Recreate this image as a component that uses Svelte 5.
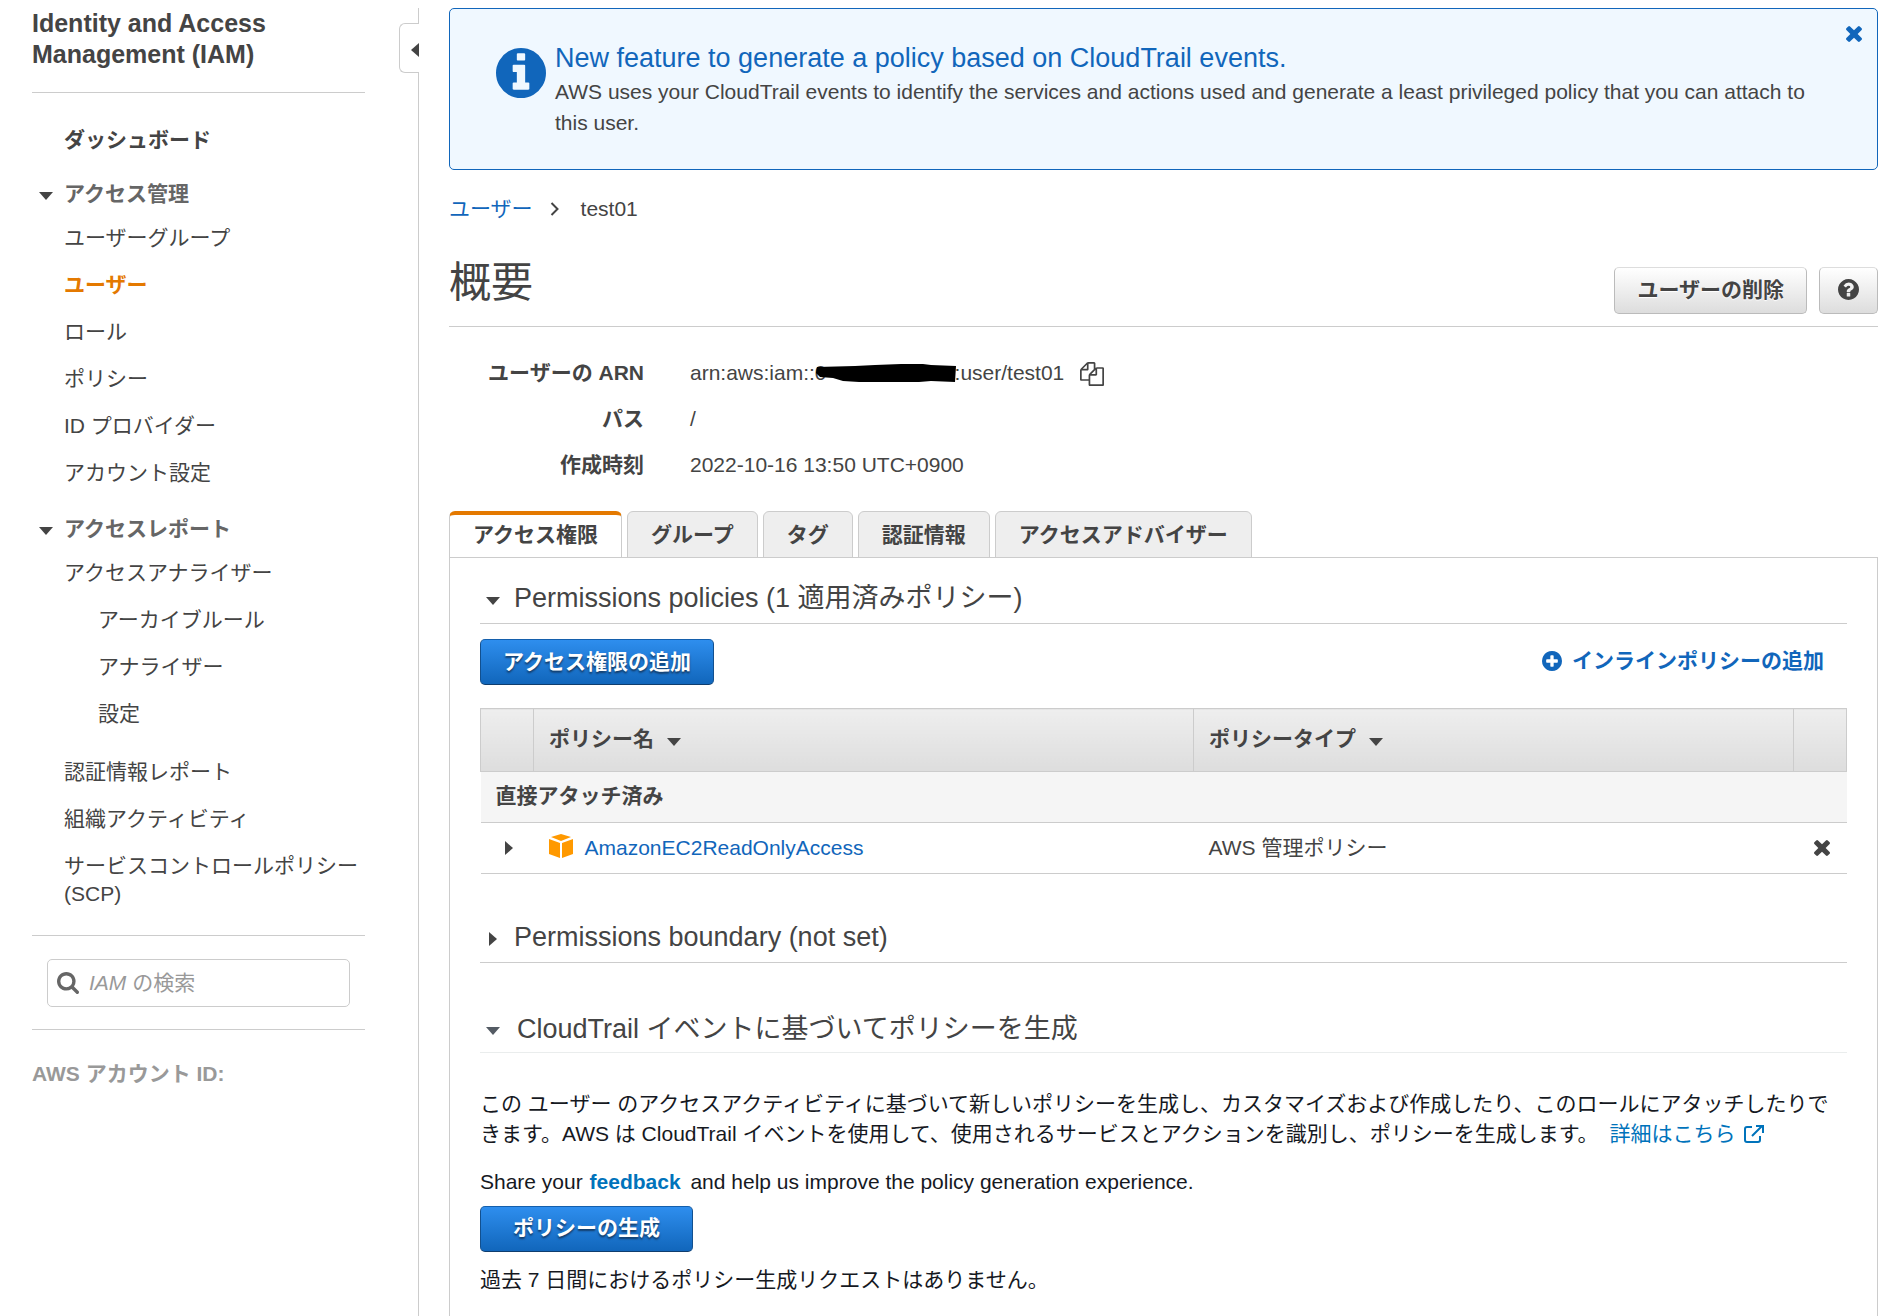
<script>
    let search = '';

    const accessItems = [
        { label: 'ユーザーグループ' },
        { label: 'ユーザー', active: true },
        { label: 'ロール' },
        { label: 'ポリシー' },
        { label: 'ID プロバイダー' },
        { label: 'アカウント設定' }
    ];

    const reportItems = [
        { label: 'アクセスアナライザー', children: ['アーカイブルール', 'アナライザー', '設定'] },
        { label: '認証情報レポート' },
        { label: '組織アクティビティ' },
        { label: 'サービスコントロールポリシー (SCP)' }
    ];

    const tabs = ['アクセス権限', 'グループ', 'タグ', '認証情報', 'アクセスアドバイザー'];
    let activeTab = tabs[0];

    const circle = 'm0 0M1664 896q0 209-103 385.5t-279.5 279.5-385.5 103-385.5-103-279.5-279.5-103-385.5 103-385.5 279.5-279.5 385.5-103 385.5 103 279.5 279.5 103 385.5z';
    const icons = {
        times: 'M1490 1322q0 40-28 68l-136 136q-28 28-68 28t-68-28l-294-294-294 294q-28 28-68 28t-68-28l-136-136q-28-28-28-68t28-68l294-294-294-294q-28-28-28-68t28-68l136-136q28-28 68-28t68 28l294 294 294-294q28-28 68-28t68 28l136 136q28 28 28 68t-28 68l-294 294 294 294q28 28 28 68z',
        question: 'M1024 1376v-192q0-14-9-23t-23-9h-192q-14 0-23 9t-9 23v192q0 14 9 23t23 9h192q14 0 23-9t9-23zm256-672q0-88-55.5-163t-138.5-116-170-41q-243 0-371 213-15 24 8 42l132 100q7 6 19 6 16 0 25-12 53-68 86-92 34-24 86-24 48 0 85.5 26t37.5 59q0 38-20 61t-68 45q-63 28-115.5 86.5t-52.5 125.5v36q0 14 9 23t23 9h192q14 0 23-9t9-23q0-19 21.5-49.5t54.5-49.5q32-18 49-28.5t46-35 44.5-48 28-60.5 12.5-81z' + circle,
        info: 'M1152 1376v-160q0-14-9-23t-23-9h-96v-512q0-14-9-23t-23-9h-320q-14 0-23 9t-9 23v160q0 14 9 23t23 9h96v320h-96q-14 0-23 9t-9 23v160q0 14 9 23t23 9h448q14 0 23-9t9-23zm-128-896v-160q0-14-9-23t-23-9h-192q-14 0-23 9t-9 23v160q0 14 9 23t23 9h192q14 0 23-9t9-23z' + circle,
        plus: 'M1344 960v-128q0-26-19-45t-45-19h-256v-256q0-26-19-45t-45-19h-128q-26 0-45 19t-19 45v256h-256q-26 0-45 19t-19 45v128q0 26 19 45t45 19h256v256q0 26 19 45t45 19h128q26 0 45-19t19-45v-256h256q26 0 45-19t19-45z' + circle,
        copy: 'M1696 384q40 0 68 28t28 68v1216q0 40-28 68t-68 28h-960q-40 0-68-28t-28-68v-288h-544q-40 0-68-28t-28-68v-672q0-40 20-88t48-76l408-408q28-28 76-48t88-20h416q40 0 68 28t28 68v328q68-40 128-40h416zm-544 213l-299 299h299v-299zm-640-384l-299 299h299v-299zm196 647l316-316v-416h-384v416q0 40-28 68t-68 28h-416v640h512v-256q0-40 20-88t48-76zm956 804v-1152h-384v416q0 40-28 68t-68 28h-416v640h896z',
        search: 'M1216 832q0-185-131.5-316.5t-316.5-131.5-316.5 131.5-131.5 316.5 131.5 316.5 316.5 131.5 316.5-131.5 131.5-316.5zm512 832q0 52-38 90t-90 38q-54 0-90-38l-343-342q-179 124-399 124-143 0-273.5-55.5t-225-150-150-225-55.5-273.5 55.5-273.5 150-225 225-150 273.5-55.5 273.5 55.5 225 150 150 225 55.5 273.5q0 220-124 399l343 343q37 37 37 90z'
    };
</script>

<div class="page">
    <aside>
        <button class="collapse" aria-label="サイドバーを閉じる"><i class="tri left"></i></button>
        <div class="side-title">Identity and Access Management (IAM)</div>
        <nav>
            <a class="dashboard" href="#dashboard">ダッシュボード</a>

            <button class="group"><i class="tri down"></i>アクセス管理</button>
            <ul>
                {#each accessItems as item}
                    <li><a href="#nav" class:active={item.active}>{item.label}</a></li>
                {/each}
            </ul>

            <button class="group second"><i class="tri down"></i>アクセスレポート</button>
            <ul>
                {#each reportItems as item}
                    <li>
                        <a href="#nav">{item.label}</a>
                        {#if item.children}
                            <ul class="nested">
                                {#each item.children as child}
                                    <li><a href="#nav">{child}</a></li>
                                {/each}
                            </ul>
                        {/if}
                    </li>
                {/each}
            </ul>
        </nav>
        <div class="search">
            <label for="iam-search" aria-label="IAM の検索">
                <svg width="22" height="22" viewBox="64 128 1664 1664"><path d={icons.search} /></svg>
            </label>
            <input id="iam-search" type="text" placeholder="IAM の検索" bind:value={search}>
        </div>
        <div class="account">AWS アカウント ID:</div>
    </aside>

    <main>
        <section class="banner">
            <svg class="info" width="50" height="50" viewBox="128 128 1536 1536"><path d={icons.info} fill-rule="evenodd" /></svg>
            <div>
                <h2>New feature to generate a policy based on CloudTrail events.</h2>
                <p>AWS uses your CloudTrail events to identify the services and actions used and generate a least privileged policy that you can attach to this user.</p>
            </div>
            <button class="close" aria-label="閉じる">
                <svg width="16" height="16" viewBox="302 366 1188 1188"><path d={icons.times} /></svg>
            </button>
        </section>

        <div class="breadcrumb">
            <a href="#users">ユーザー</a>
            <svg width="10" height="14" viewBox="0 0 10 14"><path d="M1.500 1L7.500 7l-6 6" fill="none" stroke="#444" stroke-width="2" /></svg>
            <span>test01</span>
        </div>

        <header>
            <h1>概要</h1>
            <button class="btn">ユーザーの削除</button>
            <button class="btn help" aria-label="ヘルプ">
                <svg width="21" height="21" viewBox="128 128 1536 1536"><path d={icons.question} fill-rule="evenodd" /></svg>
            </button>
        </header>

        <dl>
            <dt>ユーザーの ARN</dt>
            <dd class="arn">
                <span>arn:aws:iam::0</span>
                <svg class="redacted" width="140" height="19" viewBox="0 0 140 19">
                    <path d="M1 3L39 2 59 1 85 0h22l8 1 25 1-1 16-24-1-12 1H43L27 17 17 14 4 13 0 9z" />
                </svg>
                <span>:user/test01</span>
                <button class="copy" aria-label="コピー">
                    <svg width="24" height="24" viewBox="0 0 1792 1792"><path d={icons.copy} /></svg>
                </button>
            </dd>
            <dt>パス</dt>
            <dd>/</dd>
            <dt>作成時刻</dt>
            <dd>2022-10-16 13:50 UTC+0900</dd>
        </dl>

        <div class="tabs" role="tablist">
            {#each tabs as tab}
                <button role="tab" aria-selected={tab === activeTab} class:selected={tab === activeTab} on:click={() => activeTab = tab}>{tab}</button>
            {/each}
        </div>

        <div class="panel">
            <h3><button><i class="tri down"></i>Permissions policies (1 適用済みポリシー)</button></h3>
            <div class="actions">
                <button class="btn primary">アクセス権限の追加</button>
                <a class="inline-policy" href="#inline">
                    <svg width="20" height="20" viewBox="128 128 1536 1536"><path d={icons.plus} fill-rule="evenodd" /></svg>
                    インラインポリシーの追加
                </a>
            </div>

            <table>
                <colgroup>
                    <col class="col-toggle"><col class="col-name"><col><col class="col-remove">
                </colgroup>
                <thead>
                    <tr>
                        <th></th>
                        <th>ポリシー名<i class="tri down sort"></i></th>
                        <th>ポリシータイプ<i class="tri down sort"></i></th>
                        <th></th>
                    </tr>
                </thead>
                <tbody>
                    <tr class="group-row"><td colspan="4">直接アタッチ済み</td></tr>
                    <tr>
                        <td class="center"><button aria-label="展開"><i class="tri right"></i></button></td>
                        <td>
                            <div class="policy">
                                <svg width="24" height="24" viewBox="0 0 24 24">
                                    <path d="M12 0l10 3-10 4L2 3z" />
                                    <path d="M0 5l11 4v15L0 20z" />
                                    <path d="M24 5L13 9v15l11-4z" />
                                </svg>
                                <a href="#policy">AmazonEC2ReadOnlyAccess</a>
                            </div>
                        </td>
                        <td>AWS 管理ポリシー</td>
                        <td class="center">
                            <button aria-label="デタッチ"><svg width="16" height="16" viewBox="302 366 1188 1188"><path d={icons.times} /></svg></button>
                        </td>
                    </tr>
                </tbody>
            </table>

            <h3 class="boundary"><button><i class="tri right"></i>Permissions boundary (not set)</button></h3>

            <h3 class="trail"><button><i class="tri down"></i>CloudTrail イベントに基づいてポリシーを生成</button></h3>
            <div class="generate">
                <p>この ユーザー のアクセスアクティビティに基づいて新しいポリシーを生成し、カスタマイズおよび作成したり、このロールにアタッチしたりできます。AWS は CloudTrail イベントを使用して、使用されるサービスとアクションを識別し、ポリシーを生成します。 <a class="learn" href="#learn">詳細はこちら<svg width="22" height="20" viewBox="0 0 22 20" stroke="currentColor" stroke-width="2"><path d="M9 3H4Q2 3 2 5v11q0 2 2 2h11q2 0 2-2v-4M9 12L19 2M13 2h7v7" /></svg></a></p>
                <p class="share">Share your <a class="feedback" href="#feedback">feedback</a> and help us improve the policy generation experience.</p>
                <button class="btn primary wide">ポリシーの生成</button>
                <p class="requests">過去 7 日間におけるポリシー生成リクエストはありません。</p>
            </div>
        </div>
    </main>
</div>

<style>
    :global(body) {
        margin: 0;
        background: #fff;
    }
    .page {
        display: flex;
        box-sizing: border-box;
        min-height: 100vh;
        padding-top: 8px;
        font-family: "Liberation Sans", "Noto Sans CJK JP", sans-serif;
        font-size: 21px;
        line-height: 28px;
        color: #444;
    }
    a {
        color: #1166bb;
        text-decoration: none;
    }
    button {
        padding: 0;
        border: none;
        background: none;
        font: inherit;
        color: inherit;
        text-align: left;
        cursor: pointer;
    }
    svg {
        display: block;
        flex: none;
        fill: currentColor;
    }
    ul, dl, dd, p, h1, h2, h3 {
        margin: 0;
        padding: 0;
        list-style: none;
        font-weight: normal;
    }

    /* arrows */
    .tri {
        display: inline-block;
        flex: none;
        border: 0 solid transparent;
    }
    .tri.down {
        border-width: 8px 7px 0;
        border-top-color: #444;
    }
    .tri.right {
        border-width: 7px 0 7px 8px;
        border-left-color: #444;
    }
    .tri.left {
        border-width: 7px 8px 7px 0;
        border-right-color: #444;
    }

    /* sidebar */
    aside {
        position: relative;
        flex: none;
        box-sizing: border-box;
        width: 419px;
        padding: 0 53px 0 32px;
        border-right: 1px solid #ccc;
    }
    .collapse {
        position: absolute;
        top: 15px;
        right: -1px;
        display: flex;
        align-items: center;
        justify-content: flex-end;
        box-sizing: border-box;
        width: 20px;
        height: 50px;
        padding-top: 3px;
        border: 1px solid #ccc;
        border-right: none;
        border-radius: 6px 0 0 6px;
        background: #fff;
    }
    .side-title {
        padding-bottom: 22px;
        border-bottom: 1px solid #ccc;
        font-size: 25px;
        line-height: 31px;
        font-weight: bold;
    }
    nav {
        padding: 33px 0 27px;
        border-bottom: 1px solid #ccc;
    }
    nav a {
        display: block;
        color: #444;
    }
    nav a.active {
        color: #e47900;
        font-weight: bold;
    }
    nav ul {
        display: flex;
        flex-direction: column;
        gap: 19px;
        padding-left: 32px;
    }
    nav ul.nested {
        padding: 19px 0 11px 34px;
    }
    .dashboard {
        padding-left: 32px;
        font-weight: bold;
    }
    .group {
        display: flex;
        align-items: center;
        gap: 11px;
        margin: 26px 0 16px 7px;
        color: #666;
        font-weight: bold;
    }
    .group .tri {
        margin-top: 3px;
    }
    .group.second {
        margin-top: 28px;
    }
    .search {
        display: flex;
        align-items: center;
        gap: 10px;
        box-sizing: border-box;
        height: 48px;
        margin: 23px 15px 22px;
        padding: 0 9px;
        border: 1px solid #ccc;
        border-radius: 5px;
        color: #666;
    }
    .search input {
        flex: 1;
        min-width: 0;
        padding: 0;
        border: none;
        outline: none;
        font: inherit;
        color: #444;
    }
    .search input::placeholder {
        color: #999;
        font-style: italic;
        font-synthesis: none;
        opacity: 1;
    }
    .account {
        padding-top: 30px;
        border-top: 1px solid #ccc;
        color: #999;
        font-weight: bold;
    }

    /* main column */
    main {
        display: flex;
        flex: 1;
        flex-direction: column;
        min-width: 0;
        margin: 0 19px 0 30px;
    }
    .banner {
        position: relative;
        display: flex;
        gap: 9px;
        padding: 33px 46px 31px;
        border: 1px solid #1166bb;
        border-radius: 5px;
        background: #f0f8ff;
    }
    .banner h2 {
        margin-bottom: 2px;
        font-size: 27px;
        line-height: 32px;
        color: #1166bb;
    }
    .banner p {
        line-height: 31px;
    }
    .info {
        margin-top: 6px;
        color: #1166bb;
    }
    .close {
        position: absolute;
        top: 17px;
        right: 15px;
        color: #1166bb;
    }
    .breadcrumb {
        display: flex;
        align-items: center;
        gap: 21px;
        margin: 25px 0 35px;
    }
    .breadcrumb a {
        margin-right: -4px;
    }
    header {
        display: flex;
        align-items: flex-end;
        gap: 12px;
        padding-bottom: 12px;
        border-bottom: 1px solid #ccc;
    }
    h1 {
        flex: 1;
        margin-bottom: 6px;
        font-size: 42px;
        line-height: 50px;
    }
    .btn {
        box-sizing: border-box;
        height: 47px;
        padding: 0 22px 1px;
        border: 1px solid #bbb;
        border-top-color: #ddd;
        border-radius: 5px;
        background: linear-gradient(#fff, #ddd);
        font-weight: bold;
        text-shadow: 0 1px 1px #fff;
    }
    .btn.help {
        padding: 0 18px 2px;
    }
    .btn.primary {
        height: 46px;
        border-color: #145fac #12508f #0f3d6e;
        background: linear-gradient(#2e8eee, #1166bb);
        color: #fff;
        text-shadow: 0 2px 2px #143b66;
    }
    .btn.wide {
        padding: 0 32px 2px;
    }
    dl {
        display: grid;
        grid-template-columns: 195px 1fr;
        gap: 18px 46px;
        margin: 32px 0;
    }
    dt {
        font-weight: bold;
        text-align: right;
    }
    .arn {
        display: flex;
        align-items: center;
    }
    .redacted {
        margin: 0 -1px 0 -11px;
        color: #000;
        z-index: 1;
    }
    .copy {
        margin: 2px 0 0 16px;
    }

    /* tabs */
    .tabs {
        display: flex;
        gap: 5px;
        margin-bottom: -1px;
    }
    .tabs button {
        box-sizing: border-box;
        height: 47px;
        padding: 0 23px;
        border: 1px solid #ccc;
        border-radius: 6px 6px 0 0;
        background: #eee;
        font-weight: bold;
    }
    .tabs button.selected {
        padding-bottom: 3px;
        border-top: 4px solid #e47900;
        border-bottom: none;
        background: #fff;
    }
    .panel {
        flex: 1;
        padding: 22px 30px 12px;
        border: 1px solid #ccc;
        border-bottom: none;
    }
    h3 {
        padding-bottom: 7px;
        border-bottom: 1px solid #ccc;
        font-size: 27px;
        line-height: 36px;
    }
    h3 button {
        display: flex;
        align-items: center;
        gap: 14px;
        padding-left: 6px;
    }
    h3 .tri {
        margin-top: 6px;
    }
    h3 .tri.right {
        margin: 4px 3px 0;
    }
    .boundary {
        margin-top: 45px;
    }
    .trail {
        margin-top: 48px;
        padding-bottom: 5px;
        border-color: #eaeded;
    }
    .trail button {
        gap: 17px;
    }
    .trail .tri.down {
        margin-top: 3px;
        border-top-color: #545b64;
    }
    .actions {
        display: flex;
        align-items: center;
        justify-content: space-between;
        padding: 15px 23px 23px 0;
    }
    .inline-policy {
        display: flex;
        align-items: center;
        gap: 10px;
        margin-bottom: 2px;
        font-weight: bold;
    }

    /* policy table */
    table {
        width: 100%;
        border-collapse: collapse;
        table-layout: fixed;
    }
    .col-toggle, .col-remove {
        width: 53px;
    }
    .col-name {
        width: 660px;
    }
    th, td {
        box-sizing: border-box;
        height: 51px;
        padding: 0 15px;
        border-bottom: 1px solid #ccc;
        text-align: left;
    }
    th {
        height: 63px;
        padding-bottom: 2px;
        border: 1px solid #ccc;
        background: linear-gradient(#eee, #ddd);
    }
    .group-row td {
        padding-bottom: 2px;
        background: #f5f5f5;
        font-weight: bold;
    }
    .sort {
        margin-left: 13px;
    }
    td.center {
        padding: 0 0 0 3px;
    }
    td.center button {
        display: flex;
        justify-content: center;
        width: 100%;
    }
    .policy {
        display: flex;
        align-items: flex-start;
        gap: 12px;
    }
    .policy svg {
        color: #f90;
    }

    .generate {
        padding-top: 36px;
        line-height: 30px;
        color: #16191f;
    }
    .generate a {
        color: #0073bb;
    }
    .learn {
        margin-left: 5px;
    }
    .learn svg {
        display: inline-block;
        margin-left: 8px;
        vertical-align: -3px;
        fill: none;
    }
    .share {
        margin: 18px 0 9px;
    }
    .feedback {
        margin: 0 4px 0 1px;
        font-weight: bold;
    }
    .requests {
        margin-top: 13px;
    }
</style>
